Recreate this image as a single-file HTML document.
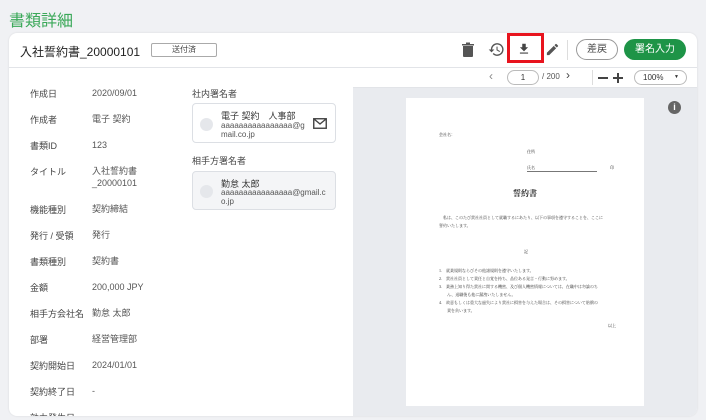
<!DOCTYPE html>
<html><head><meta charset="utf-8"><style>
*{margin:0;padding:0;box-sizing:border-box}
body{width:706px;height:420px;overflow:hidden;background:#f0f1f4;font-family:"Liberation Sans","Noto Sans CJK JP",sans-serif;position:relative;color:#333}
.a{position:absolute;white-space:nowrap}
.lbl{font-size:9px;color:#444}
.val{font-size:9px;color:#555}
</style></head><body>
<div class="a" style="left:9px;top:7px;font-size:16px;color:#3aa858">書類詳細</div>
<div class="a" style="left:9px;top:33px;width:688px;height:383px;background:#fff;border-radius:8px;overflow:hidden;box-shadow:0 0 2px rgba(0,0,0,.1)">
 <div class="a" style="left:11px;top:10px;font-size:12px;color:#222">入社誓約書_20000101</div>
 <div class="a" style="left:142px;top:10px;width:66px;height:14px;border:1px solid #aaa;border-radius:2px;font-size:8px;text-align:center;line-height:12px;color:#444">送付済</div>
 <svg class="a" style="left:452px;top:9px" width="14" height="16" viewBox="0 0 14 16"><path d="M2 4h10v10a1 1 0 0 1-1 1H3a1 1 0 0 1-1-1z M1 2h12v1.5H1z M5 0.5h4v1.5H5z" fill="#555"/></svg>
 <svg class="a" style="left:479px;top:8px" width="17" height="17" viewBox="0 0 24 24"><path d="M13 3a9 9 0 0 0-9 9H1l4 4 4-4H6a7 7 0 1 1 2.05 4.95l-1.42 1.42A9 9 0 1 0 13 3zm-1 5v5l4.25 2.52.77-1.28-3.52-2.09V8z" fill="#555"/></svg>
 <div class="a" style="left:498px;top:0px;width:37px;height:30px;border:3px solid #e8141e"></div>
 <svg class="a" style="left:508px;top:9px" width="14" height="14" viewBox="0 0 24 24"><path d="M19 9h-4V3H9v6H5l7 7 7-7zM5 18v2h14v-2z" fill="#444"/></svg>
 <svg class="a" style="left:536px;top:9px" width="15" height="15" viewBox="0 0 24 24"><path d="M3 17.25V21h3.75L17.81 9.94l-3.75-3.75zM20.71 7.04a1 1 0 0 0 0-1.41l-2.34-2.34a1 1 0 0 0-1.41 0l-1.83 1.83 3.75 3.75z" fill="#555"/></svg>
 <div class="a" style="left:558px;top:7px;width:1px;height:20px;background:#ddd"></div>
 <div class="a" style="left:567px;top:6px;width:42px;height:21px;border:1px solid #999;border-radius:11px;font-size:10px;text-align:center;line-height:19px;color:#444">差戻</div>
 <div class="a" style="left:615px;top:6px;width:62px;height:21px;background:#1e9447;border-radius:11px;font-size:10px;text-align:center;line-height:21px;color:#fff">署名入力</div>
 <div class="a" style="left:0;top:34px;width:688px;height:1px;background:#e2e4e8"></div>
 <div class="a" style="left:344px;top:35px;width:344px;height:348px;background:#e9ebef"></div>
 <div class="a" style="left:344px;top:35px;width:344px;height:20px;background:#fff;border-bottom:1px solid #e2e4e8"></div>
 <div class="a" style="left:480px;top:36px;font-size:12px;color:#888">‹</div>
 <div class="a" style="left:498px;top:37px;width:32px;height:15px;border:1px solid #bbb;border-radius:8px;font-size:8px;text-align:center;line-height:13px">1</div>
 <div class="a" style="left:533px;top:39px;font-size:8px;color:#555">/ 200</div>
 <div class="a" style="left:557px;top:35px;font-size:12px;color:#444">›</div>
 <div class="a" style="left:583px;top:37px;width:1px;height:15px;background:#ddd"></div>
 <div class="a" style="left:589px;top:44px;width:10px;height:1.5px;background:#444"></div>
 <div class="a" style="left:604px;top:44px;width:10px;height:1.5px;background:#444"></div>
 <div class="a" style="left:608.3px;top:39.5px;width:1.5px;height:10px;background:#444"></div>
 <div class="a" style="left:625px;top:37px;width:53px;height:15px;border:1px solid #bbb;border-radius:8px;font-size:8px;line-height:13px;padding-left:8px">100%<span style="position:absolute;right:7px;font-size:5px">▼</span></div>
 <div class="a" style="left:659px;top:68px;width:13px;height:13px;border-radius:50%;background:#666;color:#fff;font-size:9px;font-weight:bold;text-align:center;line-height:13px">i</div>
 <div class="a" style="left:397px;top:65px;width:238px;height:308px;background:#fff;font-family:'Liberation Serif','Noto Serif CJK SC',serif;color:#222">
  <div class="a" style="left:33px;top:34px;font-size:4px">会社名：</div>
  <div class="a" style="left:121px;top:51px;font-size:4px">住所</div>
  <div class="a" style="left:121px;top:67px;font-size:4px">氏名</div>
  <div class="a" style="left:121px;top:73px;width:70px;height:1px;background:#777"></div>
  <div class="a" style="left:204px;top:67px;font-size:4px">印</div>
  <div class="a" style="left:107px;top:90px;font-size:8px;font-weight:bold">誓約書</div>
  <div class="a" style="left:33px;top:116px;font-size:4px;line-height:8px;color:#333">　私は、このたび貴社社員として就職するにあたり、以下の事項を遵守することを、ここに<br>誓約いたします。</div>
  <div class="a" style="left:118px;top:151px;font-size:4px">記</div>
  <div class="a" style="left:33px;top:169px;font-size:4px;line-height:8px;color:#333">1.　就業規則ならびその他諸規則を遵守いたします。<br>2.　貴社社員として責任と自覚を持ち、品位ある発言・行動に努めます。<br>3.　業務上知り得た貴社に関する機密、及び個人機密情報については、在職中は勿論のち<br>　　ん、退職後も他に漏洩いたしません。<br>4.　故意もしくは重大な過失により貴社に損害を与えた場合は、その損害について賠償の<br>　　責を負います。</div>
  <div class="a" style="left:202px;top:225px;font-size:4px">以上</div>
 </div>
 <div class="a" style="left:21px;top:48px;line-height:26px">
  <div class="lbl">作成日</div><div class="lbl">作成者</div><div class="lbl">書類ID</div><div class="lbl" style="height:38px">タイトル</div><div class="lbl">機能種別</div><div class="lbl">発行 / 受領</div><div class="lbl">書類種別</div><div class="lbl">金額</div><div class="lbl">相手方会社名</div><div class="lbl">部署</div><div class="lbl">契約開始日</div><div class="lbl">契約終了日</div><div class="lbl">効力発生日</div>
 </div>
 <div class="a" style="left:83px;top:47px;line-height:26px">
  <div class="val">2020/09/01</div><div class="val">電子 契約</div><div class="val">123</div><div class="val" style="line-height:12px;height:38px;padding-top:7px">入社誓約書<br>_20000101</div><div class="val">契約締結</div><div class="val">発行</div><div class="val">契約書</div><div class="val">200,000 JPY</div><div class="val">勤怠 太郎</div><div class="val">経営管理部</div><div class="val">2024/01/01</div><div class="val">-</div><div class="val">-</div>
 </div>
 <div class="a lbl" style="left:183px;top:54px">社内署名者</div>
 <div class="a" style="left:183px;top:70px;width:144px;height:40px;border:1px solid #dcdfe4;border-radius:4px">
  <div class="a" style="left:7px;top:14px;width:13px;height:13px;border-radius:50%;background:#e5e7eb"></div>
  <div class="a" style="left:28px;top:5px;font-size:9px;color:#333">電子 契約　人事部</div>
  <div class="a" style="left:28px;top:17px;font-size:8px;line-height:9px;color:#555">aaaaaaaaaaaaaaaa@g<br>mail.co.jp</div>
  <svg class="a" style="left:120px;top:14px" width="14" height="11" viewBox="0 0 14 11"><rect x="0.75" y="0.75" width="12.5" height="9.5" fill="none" stroke="#444" stroke-width="1.4"/><path d="M1 1l6 5 6-5" fill="none" stroke="#444" stroke-width="1.4"/></svg>
 </div>
 <div class="a lbl" style="left:183px;top:121px">相手方署名者</div>
 <div class="a" style="left:183px;top:138px;width:144px;height:39px;border:1px solid #dcdfe4;border-radius:4px;background:#f4f5f7">
  <div class="a" style="left:7px;top:13px;width:13px;height:13px;border-radius:50%;background:#e5e7eb"></div>
  <div class="a" style="left:28px;top:5px;font-size:9px;color:#333">勤怠 太郎</div>
  <div class="a" style="left:28px;top:16px;font-size:8px;line-height:9px;color:#555">aaaaaaaaaaaaaaaa@gmail.c<br>o.jp</div>
 </div>
</div>
</body></html>
